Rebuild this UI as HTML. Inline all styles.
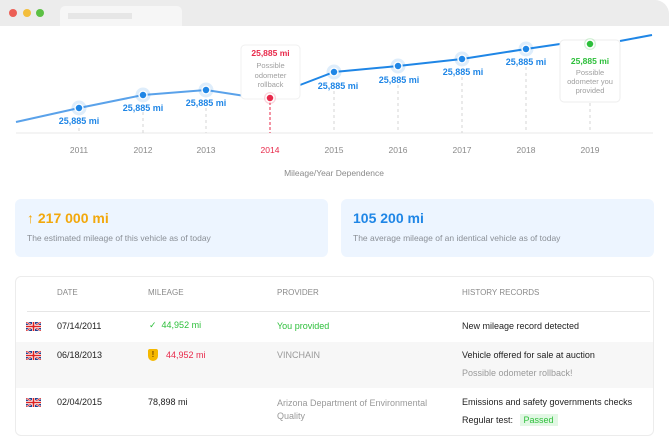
<!DOCTYPE html>
<html><head><meta charset="utf-8"><style>
*{margin:0;padding:0;box-sizing:border-box}
body{width:669px;height:422px;overflow:hidden;background:#fff;font-family:"Liberation Sans",sans-serif;position:relative}
.a{position:absolute;white-space:nowrap}
.lbl{font-size:9px;font-weight:bold;color:#1f86e6;transform:translateX(-50%)}
.yr{font-size:8.5px;color:#8a8a8a;transform:translateX(-50%);top:145px}
.card{position:absolute;top:199px;height:58px;width:313px;background:#edf5ff;border-radius:6px}
.big{position:absolute;left:12px;top:11px;font-size:14px;font-weight:bold}
.sub{position:absolute;left:12px;top:34px;font-size:8.5px;color:#8a8f96}
.h{font-size:8px;color:#8a8a8a;top:288px}
.t{font-size:9px;color:#222}
.flag{width:15px;height:9px}
</style></head><body>
<div class="a" style="left:0;top:0;width:669px;height:26px;background:#ececec;border-radius:0 14px 0 0"></div>
<div class="a" style="left:9px;top:9px;width:8px;height:8px;border-radius:50%;background:#ec5f56"></div>
<div class="a" style="left:23px;top:9px;width:8px;height:8px;border-radius:50%;background:#f3be3c"></div>
<div class="a" style="left:36px;top:9px;width:8px;height:8px;border-radius:50%;background:#5cc044"></div>
<div class="a" style="left:60px;top:6px;width:122px;height:20px;background:#f6f6f6;border-radius:5px 5px 0 0"></div>
<div class="a" style="left:68px;top:13px;width:64px;height:6px;background:#e6e6e6"></div>

<svg class="a" style="left:0;top:0" width="669" height="190">
<line x1="16" y1="133" x2="653" y2="133" stroke="#e8e8e8"/>
<g stroke="#d6d6d6" stroke-dasharray="3,3">
<line x1="79" y1="128" x2="79" y2="133"/><line x1="143" y1="112" x2="143" y2="133"/><line x1="206" y1="108" x2="206" y2="133"/>
<line x1="334" y1="91" x2="334" y2="133"/><line x1="398" y1="85" x2="398" y2="133"/><line x1="462" y1="77" x2="462" y2="133"/>
<line x1="526" y1="67" x2="526" y2="133"/><line x1="590" y1="103" x2="590" y2="133"/></g>
<line x1="270" y1="102" x2="270" y2="133" stroke="#e8294a" stroke-dasharray="3,2"/>
<polyline fill="none" stroke="#5aa2ea" stroke-width="2" points="16,122 79,108 143,95 206,90 245,96"/>
<polyline fill="none" stroke="#1f86e6" stroke-width="2" points="300,85 334,72 398,66 462,59 526,49 560,44"/>
<polyline fill="none" stroke="#1f86e6" stroke-width="2" points="620,41 652,35"/>
<g fill="#1f86e6" stroke="#fff" stroke-width="1.5">
<circle cx="79" cy="108" r="4"/><circle cx="143" cy="95" r="4"/><circle cx="206" cy="90" r="4"/><circle cx="334" cy="72" r="4"/><circle cx="398" cy="66" r="4"/><circle cx="462" cy="59" r="4"/><circle cx="526" cy="49" r="4"/></g>
<g fill="none" stroke="#1f86e6" stroke-opacity=".15" stroke-width="3">
<circle cx="79" cy="108" r="6"/><circle cx="143" cy="95" r="6"/><circle cx="206" cy="90" r="6"/><circle cx="334" cy="72" r="6"/><circle cx="398" cy="66" r="6"/><circle cx="462" cy="59" r="6"/><circle cx="526" cy="49" r="6"/></g>
<rect x="241" y="45" width="59" height="54" rx="4" fill="#fff" stroke="#f0f0f0"/>
<rect x="560" y="40" width="60" height="62" rx="4" fill="#fff" stroke="#eee"/>
<circle cx="270" cy="98" r="6" fill="#e8294a" fill-opacity=".2"/><circle cx="270" cy="98" r="4" fill="#e8294a" stroke="#fff" stroke-width="1.5"/>
<circle cx="590" cy="44" r="6" fill="#2cbf3a" fill-opacity=".2"/><circle cx="590" cy="44" r="4" fill="#2cbf3a" stroke="#fff" stroke-width="1.5"/>
</svg>
<div class="a lbl" style="left:79px;top:116px">25,885 mi</div>
<div class="a lbl" style="left:143px;top:103px">25,885 mi</div>
<div class="a lbl" style="left:206px;top:98px">25,885 mi</div>
<div class="a lbl" style="left:338px;top:81px">25,885 mi</div>
<div class="a lbl" style="left:399px;top:75px">25,885 mi</div>
<div class="a lbl" style="left:463px;top:67px">25,885 mi</div>
<div class="a lbl" style="left:526px;top:57px">25,885 mi</div>
<div class="a" style="left:241px;top:48px;width:59px;text-align:center;font-size:8.5px;font-weight:bold;color:#e8294a">25,885 mi</div>
<div class="a" style="left:241px;top:61px;width:59px;text-align:center;font-size:7.5px;line-height:9.5px;color:#a0a0a0;white-space:normal">Possible<br>odometer<br>rollback</div>
<div class="a" style="left:560px;top:56px;width:60px;text-align:center;font-size:8.5px;font-weight:bold;color:#2cbf3a">25,885 mi</div>
<div class="a" style="left:560px;top:68px;width:60px;text-align:center;font-size:7.5px;line-height:9px;color:#a0a0a0;white-space:normal">Possible<br>odometer you<br>provided</div>
<div class="a yr" style="left:79px">2011</div><div class="a yr" style="left:143px">2012</div><div class="a yr" style="left:206px">2013</div>
<div class="a yr" style="left:270px;color:#e8294a">2014</div><div class="a yr" style="left:334px">2015</div><div class="a yr" style="left:398px">2016</div>
<div class="a yr" style="left:462px">2017</div><div class="a yr" style="left:526px">2018</div><div class="a yr" style="left:590px">2019</div>
<div class="a" style="left:334px;top:168px;transform:translateX(-50%);font-size:8.5px;color:#8a8a8a">Mileage/Year Dependence</div>

<div class="card" style="left:15px"><div class="big" style="color:#f2a80c">&#8593; 217 000 mi</div><div class="sub">The estimated mileage of this vehicle as of today</div></div>
<div class="card" style="left:341px"><div class="big" style="color:#1f86e6">105 200 mi</div><div class="sub">The average mileage of an identical vehicle as of today</div></div>

<div class="a" style="left:15px;top:276px;width:639px;height:160px;border:1px solid #ececec;border-radius:6px"></div>
<div class="a h" style="left:57px">DATE</div><div class="a h" style="left:148px">MILEAGE</div><div class="a h" style="left:277px">PROVIDER</div><div class="a h" style="left:462px">HISTORY RECORDS</div>
<div class="a" style="left:27px;top:311px;width:623px;height:1px;background:#e6e6e6"></div>
<div class="a" style="left:16px;top:342px;width:637px;height:46px;background:#f7f7f7"></div>

<svg width="0" height="0" style="position:absolute"><defs><g id="uk"><rect width="15" height="9" fill="#24408e"/><path d="M0 0L15 9M15 0L0 9" stroke="#fff" stroke-width="2"/><path d="M0 0L15 9M15 0L0 9" stroke="#d22" stroke-width=".8"/><path d="M7.5 0V9M0 4.5H15" stroke="#fff" stroke-width="3"/><path d="M7.5 0V9M0 4.5H15" stroke="#d22" stroke-width="1.6"/></g></defs></svg>
<svg class="a flag" style="left:26px;top:322px"><use href="#uk"/></svg>
<svg class="a flag" style="left:26px;top:351px"><use href="#uk"/></svg>
<svg class="a flag" style="left:26px;top:398px"><use href="#uk"/></svg>

<div class="a t" style="left:57px;top:321px">07/14/2011</div>
<div class="a" style="left:149px;top:320px;font-size:9px;color:#2cbf3a">&#10003;&nbsp;&nbsp;44,952 mi</div>
<div class="a" style="left:277px;top:321px;font-size:9px;color:#2cbf3a">You provided</div>
<div class="a t" style="left:462px;top:321px">New mileage record detected</div>

<div class="a t" style="left:57px;top:350px">06/18/2013</div>
<div class="a" style="left:148px;top:349px;width:10px;height:12px;background:#f5b800;border-radius:2px 2px 5px 5px;font-size:8px;font-weight:bold;text-align:center;color:#7a4a00;line-height:12px">!</div>
<div class="a" style="left:166px;top:350px;font-size:9px;color:#e8294a">44,952 mi</div>
<div class="a" style="left:277px;top:350px;font-size:9px;color:#999">VINCHAIN</div>
<div class="a t" style="left:462px;top:350px">Vehicle offered for sale at auction</div>
<div class="a" style="left:462px;top:368px;font-size:9px;color:#999">Possible odometer rollback!</div>

<div class="a t" style="left:57px;top:397px">02/04/2015</div>
<div class="a t" style="left:148px;top:397px">78,898 mi</div>
<div class="a" style="left:277px;top:397px;font-size:9px;color:#999;line-height:13px">Arizona Department of Environmental<br>Quality</div>
<div class="a t" style="left:462px;top:397px">Emissions and safety governments checks</div>
<div class="a t" style="left:462px;top:415px">Regular test: <span style="background:#e2f7e4;color:#2cbf3a;padding:1px 4px;margin-left:4px">Passed</span></div>
</body></html>
